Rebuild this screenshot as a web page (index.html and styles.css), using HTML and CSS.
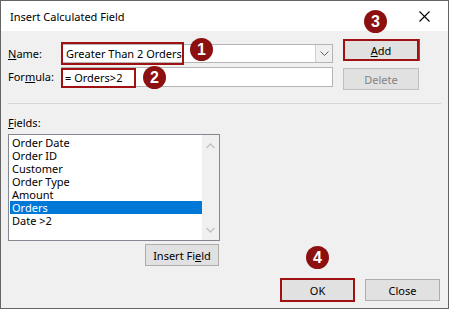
FILE: index.html
```html
<!DOCTYPE html>
<html lang="en">
<head>
    <meta charset="UTF-8">
    <title>Insert Calculated Field</title>
    <link rel="stylesheet" href="styles.css">
</head>
<body>
<div class="window">
    <div class="titlebar">
        <span class="title">Insert Calculated Field</span>
        <svg class="close" width="11" height="11" viewBox="0 0 11 11">
            <path d="M0.5 0.5L10.5 10.5M10.5 0.5L0.5 10.5" stroke="#000" stroke-width="1.1" fill="none"/>
        </svg>
    </div>
    <div class="content">
        <div class="form">
            <div class="lbl lbl-name"><u>N</u>ame:</div>
            <div class="combo">
                <span class="combo-text">Greater Than 2 Orders</span>
                <span class="combo-btn">
                    <svg width="9" height="5" viewBox="0 0 9 5"><path d="M0.5 0.5L4.5 4.5L8.5 0.5" stroke="#606060" fill="none"/></svg>
                </span>
                <span class="mark mark-name"></span>
            </div>
            <button class="btn btn-add"><u>A</u>dd</button>

            <div class="lbl lbl-formula">For<u>m</u>ula:</div>
            <div class="field">
                <span class="field-text">= Orders&gt;2</span>
                <span class="mark mark-formula"></span>
            </div>
            <button class="btn btn-delete" disabled>Delete</button>
        </div>

        <div class="sep"></div>

        <div class="lbl lbl-fields"><u>F</u>ields:</div>
        <div class="fields-box">
            <div class="listbox">
                <ul class="items">
                    <li>Order Date</li>
                    <li>Order ID</li>
                    <li>Customer</li>
                    <li>Order Type</li>
                    <li>Amount</li>
                    <li class="selected">Orders</li>
                    <li>Date &gt;2</li>
                </ul>
                <div class="scrollbar">
                    <svg width="9" height="6" viewBox="0 0 9 6"><path d="M0.5 5L4.5 1L8.5 5" stroke="#c2c2c2" stroke-width="1.4" fill="none"/></svg>
                    <svg width="9" height="6" viewBox="0 0 9 6"><path d="M0.5 1L4.5 5L8.5 1" stroke="#c2c2c2" stroke-width="1.4" fill="none"/></svg>
                </div>
            </div>
            <button class="btn btn-insert">Insert Fi<u>e</u>ld</button>
        </div>

        <div class="footer">
            <button class="btn btn-ok">OK</button>
            <button class="btn btn-close">Close</button>
        </div>
    </div>

    <span class="badge badge-1">1</span>
    <span class="badge badge-2">2</span>
    <span class="badge badge-3">3</span>
    <span class="badge badge-4">4</span>
</div>
</body>
</html>
```

FILE: styles.css
```css
* {
    padding: 0;
    margin: 0;
    box-sizing: border-box;
}
body {
    font-family: "Noto Sans", "Open Sans", sans-serif;
    font-size: 11px;
    color: #000;
    background: #fff;
}
ul {
    list-style: none;
}
.window {
    position: relative;
    width: 449px;
    height: 309px;
    border: 1px solid #646464;
    background-color: #f0f0f0;
}
.titlebar {
    height: 30px;
    background-color: #fff;
    display: flex;
    align-items: center;
    justify-content: space-between;
    padding: 0 18px 0 9px;
}
.title {
    font-size: 11px;
}
.content {
    padding: 8px 7px 0 7px;
}

/* name / formula rows */
.form {
    display: grid;
    grid-template-columns: 53px 272px 86px;
    grid-template-rows: 28px 24px;
}
.lbl {
    line-height: 19px;
}
.lbl-name {
    margin-top: 5px;
}
.combo {
    position: relative;
    margin-top: 5px;
    height: 19px;
    border: 1px solid #b4b4b4;
    background-color: #fff;
    display: flex;
    align-items: center;
}
.combo-text {
    flex: 1;
    padding-left: 4px;
}
.combo-btn {
    width: 17px;
    height: 17px;
    border-left: 1px solid #d0d0d0;
    background-color: #f0f0f0;
    display: flex;
    align-items: center;
    justify-content: center;
}
.field {
    position: relative;
    height: 20px;
    border: 1px solid #b4b4b4;
    background-color: #fff;
    display: flex;
    align-items: center;
    padding-left: 3px;
}
.mark {
    position: absolute;
    border: 2px solid #a01212;
}
.mark-name {
    left: -1px;
    top: -3px;
    width: 123px;
    height: 23px;
}
.mark-formula {
    left: -1px;
    top: 0;
    width: 75px;
    height: 20px;
}

.btn {
    font-family: inherit;
    font-size: 11px;
    color: #000;
    width: 76px;
    height: 22px;
    border: 1px solid #adadad;
    background-color: #e1e1e1;
}
.btn-add {
    justify-self: end;
    border: 2px solid #a01212;
    box-shadow: 1px 0 0 #0078d7;
}
.btn-delete {
    justify-self: end;
    margin-top: 1px;
    color: #838383;
    border-color: #bfbfbf;
}

.sep {
    height: 1px;
    margin: 12px 0 0 0;
    background-color: #d5d5d5;
}

/* fields list */
.lbl-fields {
    margin-top: 10px;
    line-height: 18px;
}
.fields-box {
    width: 212px;
    margin-top: 2px;
    display: flex;
    flex-direction: column;
}
.listbox {
    height: 107px;
    border: 1px solid #828790;
    background-color: #fff;
    display: flex;
}
.items {
    flex: 1;
    padding-top: 1px;
}
.items li {
    height: 13px;
    line-height: 13px;
    margin-left: 1px;
    padding-left: 2px;
}
.items li.selected {
    background-color: #0078d7;
    color: #fff;
}
.scrollbar {
    width: 17px;
    background-color: #f0f0f0;
    display: flex;
    flex-direction: column;
    justify-content: space-between;
    align-items: center;
    padding: 8px 0 7px 0;
}
.btn-insert {
    align-self: flex-end;
    width: 74px;
    margin: 3px 1px 0 0;
}

.footer {
    display: flex;
    justify-content: flex-end;
    gap: 10px;
    margin-top: 12px;
    padding-right: 1px;
}
.btn-ok {
    width: 75px;
    height: 24px;
    border: 2px solid #a01212;
}
.btn-close {
    width: 75px;
    margin-top: 1px;
}

/* numbered markers */
.badge {
    position: absolute;
    width: 23px;
    height: 23px;
    border-radius: 50%;
    background-color: #8c1010;
    color: #fff;
    font-family: "Liberation Sans", Arial, sans-serif;
    font-weight: bold;
    font-size: 16px;
    line-height: 23px;
    text-align: center;
}
.badge-1 {
    left: 189px;
    top: 37px;
}
.badge-2 {
    left: 142px;
    top: 65px;
}
.badge-3 {
    left: 363px;
    top: 9px;
}
.badge-4 {
    left: 305px;
    top: 245px;
}
```
